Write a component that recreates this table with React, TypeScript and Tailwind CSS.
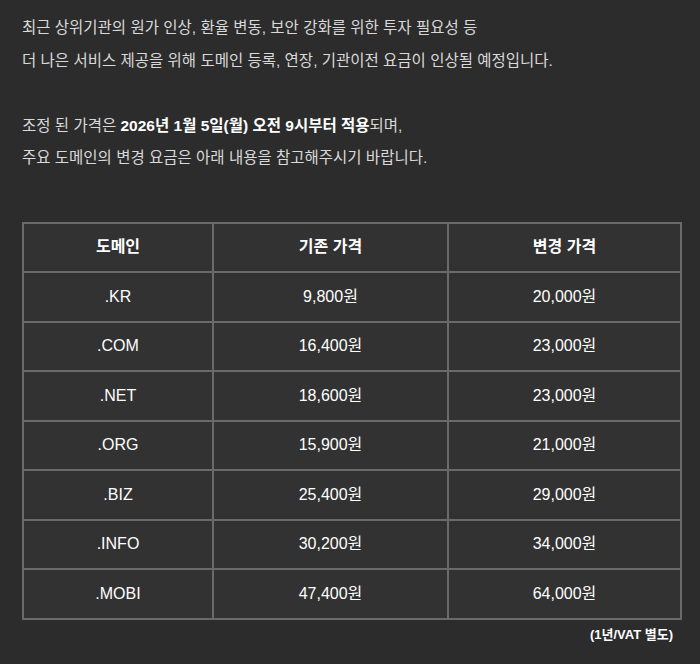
const rows = [
  { domain: ".KR", before: "9,800원", after: "20,000원" },
  { domain: ".COM", before: "16,400원", after: "23,000원" },
  { domain: ".NET", before: "18,600원", after: "23,000원" },
  { domain: ".ORG", before: "15,900원", after: "21,000원" },
  { domain: ".BIZ", before: "25,400원", after: "29,000원" },
  { domain: ".INFO", before: "30,200원", after: "34,000원" },
  { domain: ".MOBI", before: "47,400원", after: "64,000원" },
];

const font = { fontFamily: '"Liberation Sans", "Noto Sans CJK KR", sans-serif' };

export default function App() {
  return (
    <div className="min-h-[664px] w-[700px] bg-[#2c2c2c] px-[22px] pt-[12px]" style={font}>
      <div className="text-[15.5px] leading-[32.5px] text-[#d9d9d9]">
        <p>최근 상위기관의 원가 인상, 환율 변동, 보안 강화를 위한 투자 필요성 등</p>
        <p>더 나은 서비스 제공을 위해 도메인 등록, 연장, 기관이전 요금이 인상될 예정입니다.</p>
        <p>&nbsp;</p>
        <p>
          조정 된 가격은{" "}
          <span className="font-bold text-white">2026년 1월 5일(월) 오전 9시부터 적용</span>
          되며,
        </p>
        <p>주요 도메인의 변경 요금은 아래 내용을 참고해주시기 바랍니다.</p>
      </div>

      <table className="mt-[47px] w-[658px] table-fixed border-collapse border-2 border-[#6a6a6a] bg-[#323232] text-center text-[16px] text-white">
        <colgroup>
          <col className="w-[190px]" />
          <col className="w-[235px]" />
          <col className="w-[233px]" />
        </colgroup>
        <thead>
          <tr className="h-[49.5px]">
            <th className="border-2 border-[#6a6a6a] font-bold">도메인</th>
            <th className="border-2 border-[#6a6a6a] font-bold">기존 가격</th>
            <th className="border-2 border-[#6a6a6a] font-bold">변경 가격</th>
          </tr>
        </thead>
        <tbody>
          {rows.map((r) => (
            <tr key={r.domain} className="h-[49.5px]">
              <td className="border-2 border-[#6a6a6a]">{r.domain}</td>
              <td className="border-2 border-[#6a6a6a]">{r.before}</td>
              <td className="border-2 border-[#6a6a6a]">{r.after}</td>
            </tr>
          ))}
        </tbody>
      </table>

      <p className="mt-[5px] pr-[5px] text-right text-[13px] font-bold text-white">(1년/VAT 별도)</p>
    </div>
  );
}
